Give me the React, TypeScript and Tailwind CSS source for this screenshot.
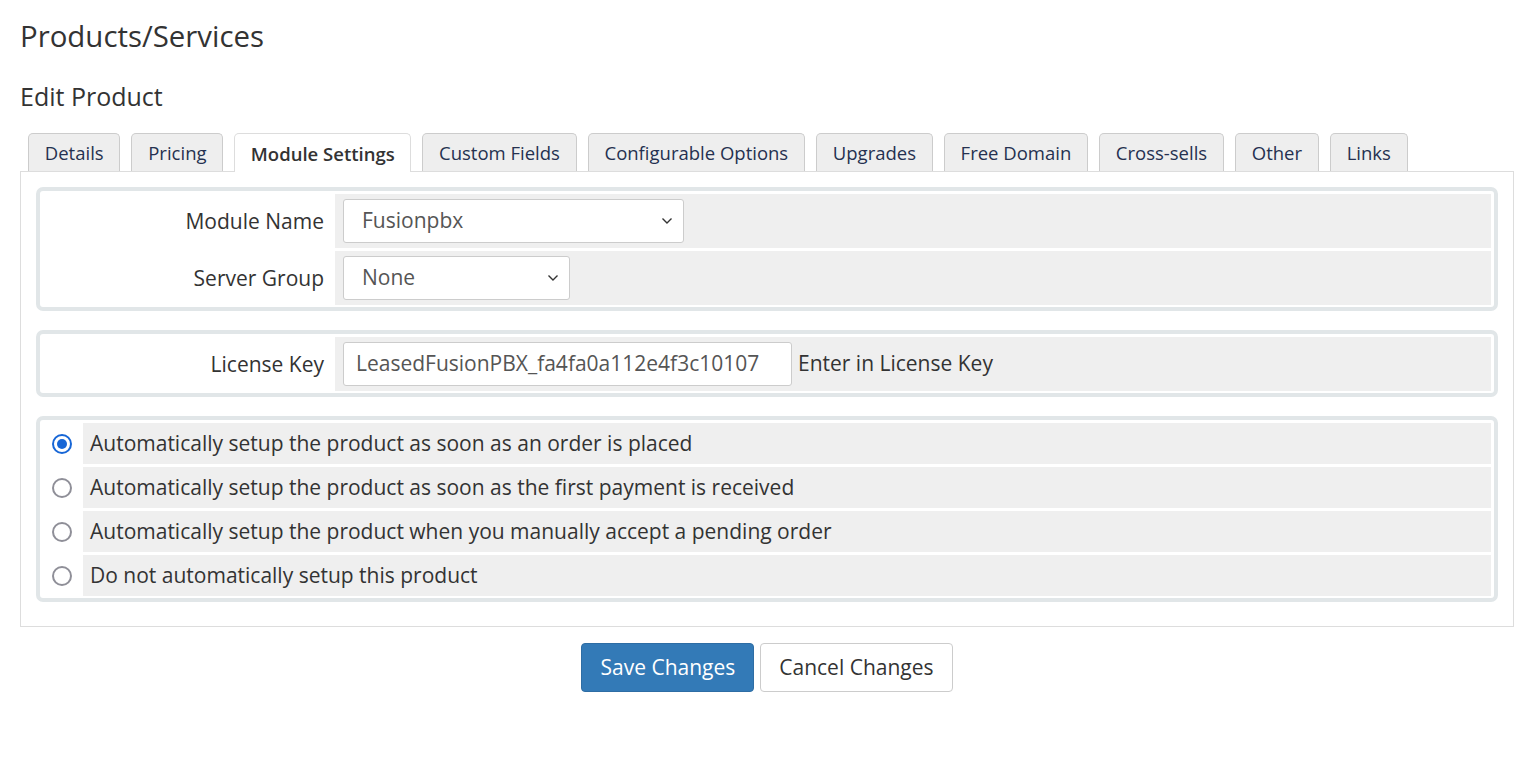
import { ReactNode } from "react";

const tabs = [
  "Details",
  "Pricing",
  "Module Settings",
  "Custom Fields",
  "Configurable Options",
  "Upgrades",
  "Free Domain",
  "Cross-sells",
  "Other",
  "Links",
];

const setupOptions = [
  "Automatically setup the product as soon as an order is placed",
  "Automatically setup the product as soon as the first payment is received",
  "Automatically setup the product when you manually accept a pending order",
  "Do not automatically setup this product",
];

function Chevron() {
  return (
    <svg width="12" height="8" viewBox="0 0 12 8" fill="none">
      <path d="M1.5 1.5 6 6l4.5-4.5" stroke="#333" strokeWidth="1.4" />
    </svg>
  );
}

function FakeSelect({ value, width }: { value: string; width: string }) {
  return (
    <div
      className={`flex h-[44px] items-center justify-between rounded-[3px] border border-[#ccc] bg-white pl-[18px] pr-[10px] text-[21px] text-[#555] ${width}`}
    >
      <span>{value}</span>
      <Chevron />
    </div>
  );
}

function Panel({ children }: { children: ReactNode }) {
  return (
    <div className="flex flex-col gap-[3px] rounded-[7px] border-4 border-[#e1e6e8] px-[3px] pt-[3px] pb-[2px]">
      {children}
    </div>
  );
}

function FieldRow({ label, children }: { label: string; children: ReactNode }) {
  return (
    <div className="flex h-[54px] gap-[3px]">
      <div className="flex w-[289px] items-center justify-end bg-white pt-px pr-[8px] text-[21px] text-[#333]">
        {label}
      </div>
      <div className="flex flex-1 items-center gap-[6px] bg-[#efefef] px-[8px]">{children}</div>
    </div>
  );
}

function Radio({ checked }: { checked: boolean }) {
  if (checked) {
    return (
      <div className="flex h-[20px] w-[20px] items-center justify-center rounded-full border-2 border-[#1766d6] bg-white">
        <div className="h-[10px] w-[10px] rounded-full bg-[#1766d6]" />
      </div>
    );
  }
  return <div className="h-[20px] w-[20px] rounded-full border-2 border-[#8f8f98] bg-white" />;
}

export default function App() {
  return (
    <div className="min-h-screen bg-white pl-[20px] pr-[10px] pt-[18px] font-['Open_Sans',sans-serif] text-[#333]">
      <h1 className="text-[29.4px] leading-[36px] font-normal">Products/Services</h1>
      <h2 className="mt-[27px] text-[25px] leading-[30px] font-normal">Edit Product</h2>

      <div className="mt-[22px] flex h-[38px] gap-[11px] pl-[8px]">
        {tabs.map((t) => {
          const active = t === "Module Settings";
          return (
            <div
              key={t}
              className={
                active
                  ? "relative z-10 -mb-px flex h-[39px] items-center rounded-t-[5px] border border-b-0 border-[#ddd] bg-white px-[15.5px] pt-px text-[18.5px] font-semibold text-[#333]"
                  : "flex h-[38px] items-center rounded-t-[5px] border border-b-0 border-[#ccc] bg-[#eee] px-[15.8px] pt-px text-[18.5px] text-[#253150]"
              }
            >
              {t}
            </div>
          );
        })}
      </div>

      <div className="flex flex-col gap-[19px] border border-[#ddd] px-[15px] pt-[15px] pb-[24px]">
        <Panel>
          <FieldRow label="Module Name">
            <FakeSelect value="Fusionpbx" width="w-[341px]" />
          </FieldRow>
          <FieldRow label="Server Group">
            <FakeSelect value="None" width="w-[227px]" />
          </FieldRow>
        </Panel>

        <Panel>
          <FieldRow label="License Key">
            <div className="flex h-[44px] w-[449px] items-center rounded-[3px] border border-[#ccc] bg-white pl-[12px] text-[21px] text-[#555]">
              LeasedFusionPBX_fa4fa0a112e4f3c10107
            </div>
            <span className="text-[21px] text-[#333]">Enter in License Key</span>
          </FieldRow>
        </Panel>

        <Panel>
          {setupOptions.map((o, i) => (
            <div key={o} className="flex h-[41px] gap-[3px]">
              <div className="flex w-[37px] items-center justify-center bg-white">
                <Radio checked={i === 0} />
              </div>
              <div className="flex flex-1 items-center bg-[#efefef] px-[7px] pt-px text-[21px] text-[#333]">{o}</div>
            </div>
          ))}
        </Panel>
      </div>

      <div className="mt-[16px] flex justify-center gap-[6px]">
        <button className="h-[49px] rounded-[4px] border border-[#2e6da4] bg-[#337ab7] px-[18px] text-[21px] text-white">
          Save Changes
        </button>
        <button className="h-[49px] rounded-[4px] border border-[#ccc] bg-white px-[18px] text-[21px] text-[#333]">
          Cancel Changes
        </button>
      </div>
    </div>
  );
}
